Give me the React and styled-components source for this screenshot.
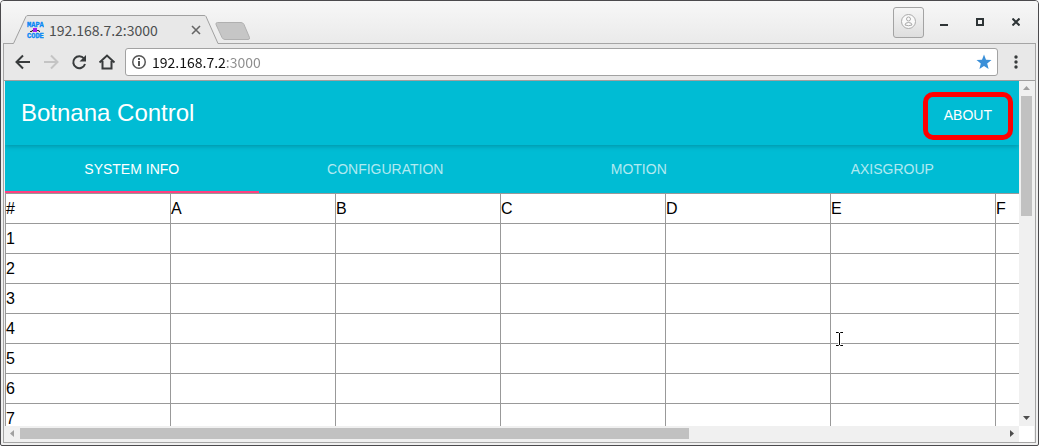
import React from "react";
import styled, { createGlobalStyle } from "styled-components";

const GlobalStyle = createGlobalStyle`
  *, *::before, *::after { box-sizing: border-box; }
  body { margin: 0; background: #fff; font-family: "Liberation Sans", Arial, sans-serif; }
  button { margin: 0; padding: 0; border: 0; background: none; font: inherit; color: inherit; }
`;

const chromeFont = `"Noto Sans CJK TC", "Noto Sans", sans-serif`;

const Window = styled.div`
  display: flex;
  flex-direction: column;
  height: 100vh;
  border: 1px solid #4b4a4d;
  border-radius: 4px 4px 2px 2px;
  background: #f0f0f0;
  overflow: hidden;
`;

const TitleBar = styled.header`
  display: flex;
  align-items: flex-end;
  flex: none;
  height: 42px;
  padding-left: 11px;
  background: linear-gradient(#f7f7f7, #eaeaea);
`;

const BrowserTab = styled.div`
  position: relative;
  z-index: 1;
  display: flex;
  align-items: center;
  width: 207px;
  height: 29px;
  margin-bottom: -1px;
  padding: 0 15px 0 14px;
  color: #4c4f50;
  font: 14px/28px ${chromeFont};
`;

const TabShape = styled.svg`
  position: absolute;
  inset: 0;
  z-index: -1;
`;

const TabTitle = styled.span`
  flex: 1;
  margin-left: 5px;
  white-space: nowrap;
`;

const TabClose = styled.button`
  display: grid;
  place-items: center;
  width: 16px;
  height: 16px;
`;

const NewTab = styled.button`
  display: block;
  height: 18px;
  margin: 0 auto 3px -4px;
  svg { display: block; }
`;

const WindowControls = styled.div`
  display: flex;
  align-items: center;
  align-self: stretch;
  margin-right: 4px;
`;

const ProfileButton = styled.button`
  display: grid;
  place-items: center;
  width: 31px;
  height: 31px;
  margin-right: 2px;
  border: 1px solid #a3a3a3;
  border-radius: 3px;
  background: linear-gradient(#f5f5f5, #dedede);
`;

const ControlButton = styled.button`
  display: grid;
  place-items: center;
  width: 36px;
  height: 36px;
`;

const Body = styled.div`
  display: flex;
  flex-direction: column;
  flex: 1;
  min-height: 0;
  margin: 0 2px 2px;
  border: 1px solid #a5a5a5;
`;

const Toolbar = styled.nav`
  display: flex;
  align-items: center;
  flex: none;
  height: 37px;
  padding: 0 1px 0 5px;
  border-bottom: 1px solid #a09f9f;
  background: #e8e8e8;
`;

const NavButton = styled.button`
  display: grid;
  place-items: center;
  width: 28px;
  height: 28px;
  color: ${(p) => (p.disabled ? "#c4c4c4" : "#383b3c")};
`;

const Omnibox = styled.label`
  display: flex;
  align-items: center;
  flex: 1;
  height: 28px;
  margin-left: 4px;
  padding: 0 5px 0 6px;
  border: 1px solid #a2a2a2;
  border-radius: 3px;
  background: #fff;
`;

const Address = styled.input`
  flex: 1;
  min-width: 0;
  height: 24px;
  margin-left: 6px;
  padding: 0;
  border: 0;
  outline: 0;
  font: 14px/24px ${chromeFont};
  color: transparent;
  background: linear-gradient(90deg, #111 74px, #8b8b8b 74px);
  background-clip: text;
  -webkit-text-fill-color: transparent;
`;

const StarButton = styled.button`
  display: grid;
  place-items: center;
  width: 16px;
  height: 16px;
`;

const MenuButton = styled(ControlButton)`
  height: 28px;
`;

const Viewport = styled.div`
  display: grid;
  grid-template: minmax(0, 1fr) 16px / minmax(0, 1fr) 15px;
  flex: 1;
  min-height: 0;
  margin: 0 1px;
  background: #fff;
`;

const Page = styled.main`
  position: relative;
  overflow: hidden;
`;

const AppBar = styled.header`
  position: relative;
  display: flex;
  align-items: center;
  justify-content: space-between;
  height: 64px;
  padding: 0 6px 0 16px;
  background: #00bcd4;
  color: #fff;
  box-shadow: 0 1px 6px rgba(0, 0, 0, 0.12), 0 1px 4px rgba(0, 0, 0, 0.12);
`;

const Title = styled.h1`
  margin: 0;
  font-size: 24px;
  line-height: 64px;
  font-weight: 400;
`;

const Highlight = styled.div`
  display: flex;
  height: 48px;
  margin-top: 6px;
  border: 5px solid #f00;
  border-radius: 10px;
`;

const AboutButton = styled.button`
  padding: 0 16px 2px;
  font-size: 14px;
  line-height: 36px;
`;

const Tabs = styled.div`
  display: grid;
  grid-template-columns: repeat(4, 1fr);
  height: 48px;
  background: #00bcd4;
`;

const Tab = styled.button`
  box-shadow: ${(p) => (p["aria-selected"] ? "inset 0 -2px #ff4081" : "none")};
  color: ${(p) => (p["aria-selected"] ? "#fff" : "rgba(255, 255, 255, 0.7)")};
  font-size: 14px;
  line-height: 48px;
`;

const Sheet = styled.table`
  table-layout: fixed;
  width: 1155px;
  border-spacing: 0;
  font-size: 16px;
  line-height: 29px;
`;

const Cell = styled.td`
  width: 165px;
  height: 30px;
  padding: 0;
  border: solid #999;
  border-width: 1px 0 0 1px;
  text-align: left;
  font-weight: 400;
  color: #000;
`;

const Scrollbar = styled.div`
  display: flex;
  flex-direction: ${(p) => (p.$vertical ? "column" : "row")};
  background: #f0f0f0;
`;

const ScrollArrow = styled.button`
  display: grid;
  place-items: center;
  flex: none;
  width: 15px;
  height: 15px;
  color: ${(p) => (p.disabled ? "#a0a0a0" : "#4d4d4d")};
`;

const Track = styled.div`
  flex: 1;
  padding: ${(p) => (p.$vertical ? "0 2px" : "2px 0 3px")};
`;

const Thumb = styled.div`
  width: ${(p) => (p.$vertical ? "100%" : "68%")};
  height: ${(p) => (p.$vertical ? "38%" : "100%")};
  background: #c1c1c1;
`;

const TextCursor = styled.svg`
  position: absolute;
  left: 830px;
  top: 251px;
`;

const Favicon = () => (
  <svg width="18" height="18" viewBox="0 0 18 18" aria-hidden="true">
    <g fill="#0787f5" stroke="#0787f5" strokeWidth=".3" fontFamily="Liberation Mono" fontWeight="700" fontSize="7">
      <text x="1" y="6">MAPA</text>
      <text x="1" y="17">CODE</text>
    </g>
    <path d="M4 10.500h2V9.500h1M11 9.500h2v1h1" fill="none" stroke="#333" />
    <path d="M7 7h4v4H7z" fill="#a020f0" />
  </svg>
);

const Arrow = ({ dir }) => {
  const shapes = {
    up: "M4 9h7L7.5 5z",
    down: "M4 5h7L7.5 9z",
    left: "M9 4v7L5 7.5z",
    right: "M6 4v7l4-3.5z",
  };
  return (
    <svg width="15" height="15" aria-hidden="true">
      <path d={shapes[dir]} fill="currentColor" />
    </svg>
  );
};

const NavIcon = ({ d }) => (
  <svg width="18" height="18" viewBox="0 0 18 18" fill="none" stroke="currentColor" strokeWidth="2" aria-hidden="true">
    <path d={d} />
  </svg>
);

const tabs = ["SYSTEM INFO", "CONFIGURATION", "MOTION", "AXISGROUP"];
const columns = ["A", "B", "C", "D", "E", "F"];
const rows = [1, 2, 3, 4, 5, 6, 7];

export default function App() {
  return (
    <>
      <GlobalStyle />
      <Window>
        <TitleBar>
          <BrowserTab>
            <TabShape width="207" height="29" aria-hidden="true">
              <path d="M0 28.500L1.500 28 14 1.500Q14.500 .5 16 .5H192Q193.500 .5 194 1.500L206 28.500V29H0z" fill="#e8e8e8" />
              <path d="M0 28.500H1.500L14 1.500Q14.500 .5 16 .5H192Q193.500 .5 194 1.500L206 28.500H207" fill="none" stroke="#a0a0a0" />
            </TabShape>
            <Favicon />
            <TabTitle>192.168.7.2:3000</TabTitle>
            <TabClose aria-label="Close tab">
              <svg width="10" height="10" aria-hidden="true">
                <path d="M1 1l8 8M9 1L1 9" stroke="#666" strokeWidth="1.600" />
              </svg>
            </TabClose>
          </BrowserTab>
          <NewTab aria-label="New tab">
            <svg width="36" height="18" aria-hidden="true">
              <path d="M2.500 .5H26Q28 .5 29 2.500L34.500 15.500Q35 17.500 33 17.500H10Q8 17.500 7 15.500L1 2.500Q.5 .5 2.500 .5z" fill="#c6c6c6" stroke="#b0b0b0" />
            </svg>
          </NewTab>
          <WindowControls>
            <ProfileButton aria-label="Profile">
              <svg width="16" height="16" fill="#fafafa" stroke="#aaa" aria-hidden="true">
                <circle cx="7.500" cy="7.500" r="7" />
                <circle cx="7.500" cy="5" r="2" />
                <path d="M4 11Q4 8.500 7.500 8.500t3.500 2.500Q7.500 12.500 4 11z" />
              </svg>
            </ProfileButton>
            <ControlButton aria-label="Minimize">
              <svg width="10" height="10" aria-hidden="true"><path d="M1 7h8v2H1z" fill="#2e3436" /></svg>
            </ControlButton>
            <ControlButton aria-label="Maximize">
              <svg width="8" height="8" aria-hidden="true"><path d="M1 1h6v6H1z" fill="none" stroke="#2e3436" strokeWidth="2" /></svg>
            </ControlButton>
            <ControlButton aria-label="Close window">
              <svg width="8" height="8" aria-hidden="true"><path d="M.5 .5l7 7M7.500 .5l-7 7" stroke="#2e3436" strokeWidth="2" /></svg>
            </ControlButton>
          </WindowControls>
        </TitleBar>
        <Body>
          <Toolbar aria-label="Browser">
            <NavButton aria-label="Back"><NavIcon d="M16 9H3M9 2.500L2.500 9 9 15.500" /></NavButton>
            <NavButton aria-label="Forward" disabled><NavIcon d="M2 9h13M9 2.500l6.500 6.500L9 15.500" /></NavButton>
            <NavButton aria-label="Reload">
              <svg width="18" height="18" aria-hidden="true">
                <path d="M14 5.500A6 6 0 1 0 15 11" fill="none" stroke="currentColor" strokeWidth="2" />
                <path d="M16 2v6.500H9.500z" fill="currentColor" />
              </svg>
            </NavButton>
            <NavButton aria-label="Home"><NavIcon d="M1.500 9.500L9 2.500l7.500 7M4.500 8v7.500h9V8" /></NavButton>
            <Omnibox>
              <svg width="14" height="14" aria-hidden="true">
                <circle cx="7" cy="7" r="6.250" fill="none" stroke="#555" strokeWidth="1.500" />
                <path d="M6 3h2v2H6zM6 6h2v5H6z" fill="#555" />
              </svg>
              <Address aria-label="Address" defaultValue="192.168.7.2:3000" spellCheck={false} />
              <StarButton aria-label="Bookmark">
                <svg width="16" height="16" aria-hidden="true">
                  <path d="M8 .5l2 5.200 5.500.3-4.300 3.500 1.400 5.500L8 12l-4.600 3 1.400-5.500L.5 6 6 5.700z" fill="#3a8fd8" />
                </svg>
              </StarButton>
            </Omnibox>
            <MenuButton aria-label="Menu">
              <svg width="4" height="14" fill="#383b3c" aria-hidden="true">
                <circle cx="2" cy="2" r="1.700" /><circle cx="2" cy="7" r="1.700" /><circle cx="2" cy="12" r="1.700" />
              </svg>
            </MenuButton>
          </Toolbar>
          <Viewport>
            <Page>
              <AppBar>
                <Title>Botnana Control</Title>
                <Highlight><AboutButton>ABOUT</AboutButton></Highlight>
              </AppBar>
              <Tabs role="tablist">
                {tabs.map((name, i) => (
                  <Tab key={name} role="tab" aria-selected={i === 0}>{name}</Tab>
                ))}
              </Tabs>
              <Sheet>
                <thead>
                  <tr>
                    <Cell as="th" scope="col">#</Cell>
                    {columns.map((c) => <Cell as="th" scope="col" key={c}>{c}</Cell>)}
                  </tr>
                </thead>
                <tbody>
                  {rows.map((r) => (
                    <tr key={r}>
                      <Cell as="th" scope="row">{r}</Cell>
                      {columns.map((c) => <Cell key={c} />)}
                    </tr>
                  ))}
                </tbody>
              </Sheet>
              <TextCursor width="9" height="14" aria-hidden="true">
                <path d="M1 .5h2.500l1 1 1-1H8M4.500 1v12M1 13.500h2.500l1-1 1 1H8" fill="none" stroke="#fff" strokeWidth="3" />
                <path d="M1 .5h2.500l1 1 1-1H8M4.500 1v12M1 13.500h2.500l1-1 1 1H8" fill="none" stroke="#000" />
              </TextCursor>
            </Page>
            <Scrollbar $vertical>
              <ScrollArrow aria-label="Scroll up" disabled><Arrow dir="up" /></ScrollArrow>
              <Track $vertical><Thumb $vertical /></Track>
              <ScrollArrow aria-label="Scroll down"><Arrow dir="down" /></ScrollArrow>
            </Scrollbar>
            <Scrollbar>
              <ScrollArrow aria-label="Scroll left" disabled><Arrow dir="left" /></ScrollArrow>
              <Track><Thumb /></Track>
              <ScrollArrow aria-label="Scroll right"><Arrow dir="right" /></ScrollArrow>
            </Scrollbar>
          </Viewport>
        </Body>
      </Window>
    </>
  );
}
